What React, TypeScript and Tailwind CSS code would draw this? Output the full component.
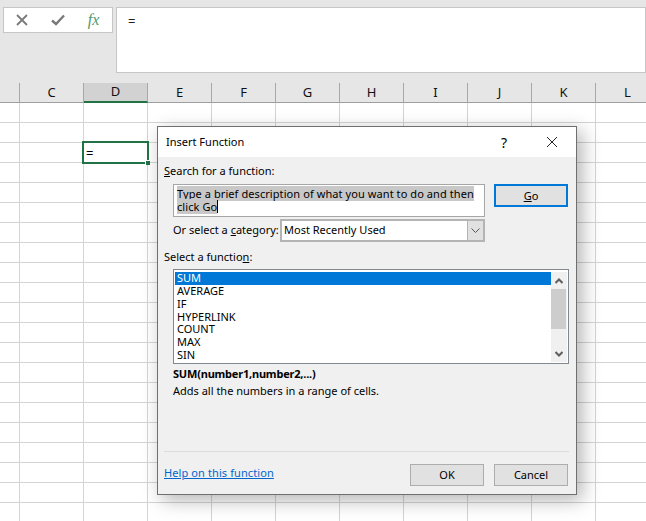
const columns = ['', 'C', 'D', 'E', 'F', 'G', 'H', 'I', 'J', 'K', 'L']
const rows = Array.from({ length: 21 }, (_, i) => i)
const functions = ['SUM', 'AVERAGE', 'IF', 'HYPERLINK', 'COUNT', 'MAX', 'SIN']

function Chevron({ up }: { up?: boolean }) {
  return (
    <svg width="8" height="6" viewBox="0 0 8 6" className="block">
      <path d={up ? 'M0.5 5 L4 1.5 L7.5 5' : 'M0.5 1 L4 4.5 L7.5 1'} fill="none" stroke="#606060" strokeWidth="2" />
    </svg>
  )
}

function Sheet() {
  return (
    <div>
      <div className="flex h-[20px] border-b border-[#9f9f9f] bg-[#e6e6e6]">
        {columns.map((col, i) => (
          <div key={i}
            className={`shrink-0 flex items-center justify-center border-r border-[#a8a8a8] text-[13px] text-[#111] ${i === 0 ? 'w-[20px]' : 'w-[64px]'} ${col === 'D' ? 'bg-[#d2d2d2] text-[#1f5f3b] border-b-2 border-b-[#217346] -mb-px' : ''}`}>
            {col}
          </div>
        ))}
      </div>
      {rows.map(row => (
        <div key={row} className="flex h-[20px] border-b border-[#d4d4d4]">
          {columns.map((col, i) => (
            <div key={i} className={`relative shrink-0 border-r border-[#d4d4d4] ${i === 0 ? 'w-[20px]' : 'w-[64px]'}`}>
              {col === 'D' && row === 2 && (
                <div className="absolute left-[-2px] top-[-2px] z-10 w-[67px] h-[23px] border-2 border-[#217346] bg-white pl-[2px] text-[13px] leading-[21px] text-black">
                  =
                  <span className="absolute right-[-3px] bottom-[-3px] w-[5px] h-[5px] bg-[#217346] border-l border-t border-white" />
                </div>
              )}
            </div>
          ))}
        </div>
      ))}
    </div>
  )
}

function Dialog() {
  return (
    <div className="absolute left-[157px] top-[126px] z-20 w-[420px] h-[369px] flex flex-col border border-[#6f6f6f] bg-[#f0f0f0] text-[11px] text-black shadow-[5px_5px_18px_rgba(0,0,0,0.3)]">
      <div className="h-[30px] shrink-0 bg-white flex items-center pl-[8px] pr-[18px]">
        <span>Insert Function</span>
        <span className="ml-auto mr-[39px] text-[14px]">?</span>
        <svg width="12" height="12" viewBox="0 0 12 12">
          <path d="M1 1 L11 11 M11 1 L1 11" stroke="#222" strokeWidth="1" fill="none" />
        </svg>
      </div>

      <div className="flex-1 flex flex-col pl-[6px] pr-[7px]">
        <div className="mt-[6px] h-[16px] leading-[16px]"><u>S</u>earch for a function:</div>

        <div className="mt-[5px] ml-[9px] flex gap-[9px]">
          <div className="w-[312px] h-[33px] border border-[#a6a6a6] bg-white pl-[3px] pt-[2px] leading-[13px] tracking-[0.08px]">
            <span className="bg-[#c8c8c8]">Type a brief description of what you want to do and then click Go</span>
            <span className="inline-block w-px h-[13px] bg-black align-top" />
          </div>
          <button className="w-[74px] h-[23px] border-2 border-[#0078d7] bg-[#e1e1e1] leading-[18px]"><u>G</u>o</button>
        </div>

        <div className="mt-[2px] ml-[9px] flex items-center h-[23px]">
          <span className="w-[107px] shrink-0 whitespace-nowrap">Or select a <u>c</u>ategory:</span>
          <div className="w-[205px] h-[23px] border-2 border-[#b4b4b4] bg-white flex items-center pl-[2px]">
            <span>Most Recently Used</span>
            <span className="ml-auto w-[16px] h-full border-l border-[#b4b4b4] bg-[#e1e1e1] flex items-center justify-center">
              <svg width="9" height="5" viewBox="0 0 9 5"><path d="M0.5 0.5 L4.5 4.5 L8.5 0.5" fill="none" stroke="#555" /></svg>
            </span>
          </div>
        </div>

        <div className="mt-[7px] h-[16px] leading-[16px]">Select a functio<u>n</u>:</div>

        <div className="mt-[4px] ml-[9px] w-[396px] h-[95px] border border-[#828790] bg-white flex p-px pt-[2px]">
          <div className="flex-1 flex flex-col">
            {functions.map((fn, i) => (
              <div key={fn} className={`h-[13px] leading-[11px] pl-[2px] ${i === 0 ? 'bg-[#0078d7] text-white' : ''}`}>{fn}</div>
            ))}
          </div>
          <div className="w-[16px] bg-[#f0f0f0] flex flex-col items-center">
            <div className="h-[17px] flex items-center justify-center"><Chevron up /></div>
            <div className="w-[15px] self-start h-[40px] bg-[#cdcdcd]" />
            <div className="flex-1 flex items-end justify-center pb-[5px]"><Chevron /></div>
          </div>
        </div>

        <div className="mt-[3px] ml-[9px] h-[14px] leading-[14px] font-bold tracking-[-0.2px]">SUM(number1,number2,...)</div>
        <div className="mt-[2px] ml-[9px] h-[16px] leading-[16px]">Adds all the numbers in a range of cells.</div>

        <div className="mt-[52px] border-t border-[#dcdcdc]" />

        <div className="mt-[12px] flex items-center pr-px">
          <a className="text-[#0066cc] underline mt-[-4px] tracking-[0.1px]">Help on this function</a>
          <button className="ml-auto w-[74px] h-[22px] border border-[#adadad] bg-[#e1e1e1]">OK</button>
          <button className="ml-[10px] w-[74px] h-[22px] border border-[#adadad] bg-[#e1e1e1]">Cancel</button>
        </div>
      </div>
    </div>
  )
}

export default function App() {
  return (
    <div className="relative h-[521px] w-[646px] overflow-hidden bg-white font-['Noto_Sans','Liberation_Sans',sans-serif]">
      <div className="h-[83px] bg-[#e6e6e6] flex items-start pt-[7px] pl-[3px]">
        <div className="w-[110px] h-[26px] border border-[#c6c6c6] bg-white flex items-center">
          <div className="w-[36px] flex justify-center">
            <svg width="12" height="12" viewBox="0 0 12 12"><path d="M1 1 L11 11 M11 1 L1 11" stroke="#7a7a7a" strokeWidth="1.8" fill="none" /></svg>
          </div>
          <div className="w-[35px] flex justify-center">
            <svg width="14" height="12" viewBox="0 0 14 12"><path d="M1 6.5 L5 10 L13 1.5" stroke="#7a7a7a" strokeWidth="2.4" fill="none" /></svg>
          </div>
          <div className="w-[37px] text-center font-['Liberation_Serif',serif] italic text-[16px] leading-none text-[#4f9a6e]">fx</div>
        </div>
        <div className="ml-[3px] flex-1 h-[66px] border border-[#c6c6c6] bg-white pl-[11px] pt-[4px] text-[13px] text-[#222]">=</div>
      </div>
      <Sheet />
      <Dialog />
    </div>
  )
}
